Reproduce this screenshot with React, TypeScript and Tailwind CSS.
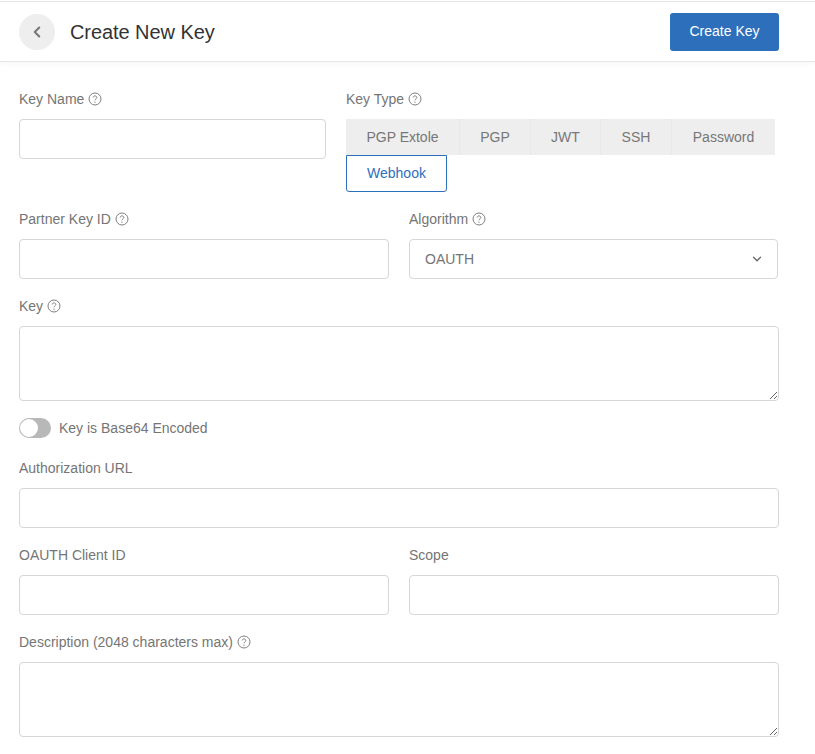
import { ChevronDown, ChevronLeft } from "lucide-react";

const inputClass =
  "block w-full h-10 rounded-[4px] border border-[#d6d6d6] bg-white px-4 outline-none";
const areaClass =
  "block w-full h-[75px] rounded-[4px] border border-[#d6d6d6] bg-white px-4 py-2 outline-none";

function Help() {
  return (
    <svg width="14" height="14" viewBox="0 0 14 14" fill="none" className="ml-1 shrink-0">
      <circle cx="7" cy="7" r="6" stroke="#808080" strokeWidth="1" />
      <path
        d="M5.2 5.5c0-1 .8-1.6 1.8-1.6s1.8.6 1.8 1.5c0 1.4-1.8 1.4-1.8 2.9"
        stroke="#808080"
        strokeWidth="1"
      />
      <circle cx="7" cy="10.2" r="0.65" fill="#808080" />
    </svg>
  );
}

function Label({ text, help }: { text: string; help?: boolean }) {
  return (
    <div className="flex h-5 items-center mb-[10px] text-[14px] leading-5 text-[#757575]">
      <span>{text}</span>
      {help && <Help />}
    </div>
  );
}

const tabs = [
  { name: "PGP Extole", w: "w-[113px]" },
  { name: "PGP", w: "w-[71px]" },
  { name: "JWT", w: "w-[70px]" },
  { name: "SSH", w: "w-[71px]" },
  { name: "Password", w: "w-[104px]" },
];

export default function App() {
  return (
    <div className="min-h-[754px] bg-white font-['Liberation_Sans',Arial,sans-serif] overflow-hidden">
      {/* header */}
      <header className="mt-px flex h-[61px] items-center justify-between border-y border-[#e6e6e6] pl-[19px] pr-9 shadow-[0_2px_6px_rgba(0,0,0,0.03)]">
        <div className="flex items-center">
          <button className="flex h-9 w-9 items-center justify-center rounded-full bg-[#eeeeee] text-[#777777]">
            <ChevronLeft size={18} strokeWidth={2.8} />
          </button>
          <h1 className="ml-[15px] text-[20px] leading-7 tracking-[-0.07px] text-[#333333]">
            Create New Key
          </h1>
        </div>
        <button className="h-[38px] w-[109px] rounded-[3px] bg-[#2d6fbb] text-[14px] text-white">
          Create Key
        </button>
      </header>

      <form className="pl-[19px] pr-9 pt-[27px]">
        {/* key name + type */}
        <div className="flex">
          <div className="w-[307px]">
            <Label text="Key Name" help />
            <input className={inputClass} />
          </div>
          <div className="ml-5 flex-1">
            <Label text="Key Type" help />
            <div className="flex h-9 w-[429px] bg-[#eeeeee] text-[14px] text-[#777777]">
              {tabs.map((t) => (
                <div
                  key={t.name}
                  className={`flex items-center justify-center border-l border-[#e8e8e8] first:border-l-0 ${t.w}`}
                >
                  {t.name}
                </div>
              ))}
            </div>
            <div className="flex h-[37px] w-[101px] items-center justify-center rounded-b-[3px] border border-[#2d6fbb] text-[14px] text-[#2d6fbb]">
              Webhook
            </div>
          </div>
        </div>

        {/* partner key + algorithm */}
        <div className="mt-[17px] grid grid-cols-2 gap-5">
          <div>
            <Label text="Partner Key ID" help />
            <input className={inputClass} />
          </div>
          <div>
            <Label text="Algorithm" help />
            <div className="flex h-10 w-[369px] items-center justify-between rounded-[4px] border border-[#d6d6d6] pl-[15px] pr-[13px] text-[14px] text-[#757575]">
              <span>OAUTH</span>
              <ChevronDown size={14} strokeWidth={2.2} className="text-[#666666]" />
            </div>
          </div>
        </div>

        <div className="mt-[17px]">
          <Label text="Key" help />
          <textarea className={areaClass} />
        </div>

        {/* base64 toggle */}
        <div className="mt-[17px] flex h-5 items-center">
          <div className="h-5 w-8 rounded-full bg-[#b8b8b8] p-px">
            <div className="h-[18px] w-[18px] rounded-full bg-white" />
          </div>
          <span className="ml-2 text-[14px] text-[#757575]">Key is Base64 Encoded</span>
        </div>

        <div className="mt-5">
          <Label text="Authorization URL" />
          <input className={inputClass} />
        </div>

        <div className="mt-[17px] grid grid-cols-2 gap-5">
          <div>
            <Label text="OAUTH Client ID" />
            <input className={inputClass} />
          </div>
          <div>
            <Label text="Scope" />
            <input className={inputClass} />
          </div>
        </div>

        <div className="mt-[17px]">
          <Label text="Description (2048 characters max)" help />
          <textarea className={areaClass} />
        </div>
      </form>
    </div>
  );
}
